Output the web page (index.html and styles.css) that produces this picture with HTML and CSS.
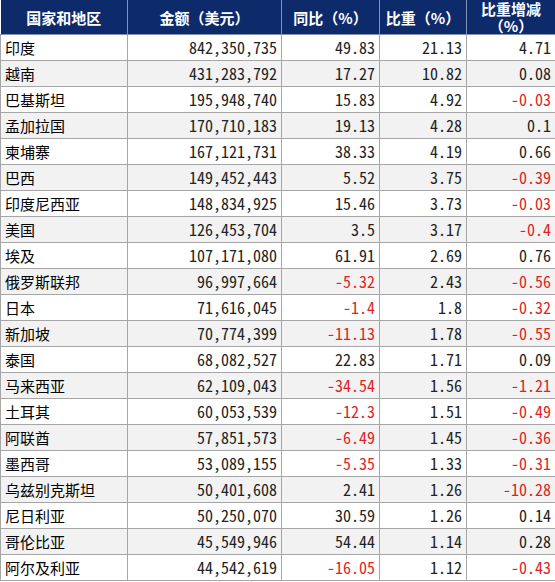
FILE: index.html
```html
<!DOCTYPE html>
<html lang="zh-CN">
<head>
  <meta charset="UTF-8" />
  <meta name="viewport" content="width=device-width, initial-scale=1" />
  <title>进口来源国家和地区</title>
  <link rel="stylesheet" href="styles.css">
</head>
<body>

  <table class="trade-table">
    <colgroup>
      <col class="col-name">
      <col class="col-amount">
      <col class="col-yoy">
      <col class="col-share">
      <col class="col-delta">
    </colgroup>
    <thead>
      <tr>
        <th>国家和地区</th>
        <th>金额（美元）</th>
        <th>同比（%）</th>
        <th>比重（%）</th>
        <th class="two-line"><div>比重增减</div><div>（%）</div></th>
      </tr>
    </thead>
    <tbody id="rows"></tbody>
  </table>

  <script>
    const rows = [
      ['印度', '842,350,735', '49.83', '21.13', '4.71'],
      ['越南', '431,283,792', '17.27', '10.82', '0.08'],
      ['巴基斯坦', '195,948,740', '15.83', '4.92', '-0.03'],
      ['孟加拉国', '170,710,183', '19.13', '4.28', '0.1'],
      ['柬埔寨', '167,121,731', '38.33', '4.19', '0.66'],
      ['巴西', '149,452,443', '5.52', '3.75', '-0.39'],
      ['印度尼西亚', '148,834,925', '15.46', '3.73', '-0.03'],
      ['美国', '126,453,704', '3.5', '3.17', '-0.4'],
      ['埃及', '107,171,080', '61.91', '2.69', '0.76'],
      ['俄罗斯联邦', '96,997,664', '-5.32', '2.43', '-0.56'],
      ['日本', '71,616,045', '-1.4', '1.8', '-0.32'],
      ['新加坡', '70,774,399', '-11.13', '1.78', '-0.55'],
      ['泰国', '68,082,527', '22.83', '1.71', '0.09'],
      ['马来西亚', '62,109,043', '-34.54', '1.56', '-1.21'],
      ['土耳其', '60,053,539', '-12.3', '1.51', '-0.49'],
      ['阿联酋', '57,851,573', '-6.49', '1.45', '-0.36'],
      ['墨西哥', '53,089,155', '-5.35', '1.33', '-0.31'],
      ['乌兹别克斯坦', '50,401,608', '2.41', '1.26', '-10.28'],
      ['尼日利亚', '50,250,070', '30.59', '1.26', '0.14'],
      ['哥伦比亚', '45,549,946', '54.44', '1.14', '0.28'],
      ['阿尔及利亚', '44,542,619', '-16.05', '1.12', '-0.43']
    ];

    const tbody = document.getElementById('rows');

    rows.forEach(row => {
      const tr = document.createElement('tr');
      tr.innerHTML = row.map((val, i) => {
        if (i === 0) return `<td class="name">${val}</td>`;
        const neg = val.startsWith('-') ? ' neg' : '';
        return `<td class="num${neg}">${val}</td>`;
      }).join('');
      tbody.appendChild(tr);
    });
  </script>

</body>
</html>
```

FILE: styles.css
```css
body {
  margin: 0;
  background: #ffffff;
  font-family: "Noto Sans CJK SC", sans-serif;
  color: #000;
}
.trade-table {
  border-collapse: collapse;
  table-layout: fixed;
  width: 555px;
}
.col-name { width: 127px; }
.col-amount { width: 154px; }
.col-yoy { width: 98px; }
.col-share { width: 87px; }
.col-delta { width: 89px; }

.trade-table th,
.trade-table td {
  border: 1px solid #a6a6a6;
  padding: 0 4px;
  white-space: nowrap;
}
.trade-table th {
  background: #0d2a6b;
  color: #fff;
  font-size: 15px;
  font-weight: bold;
  height: 34px;
  line-height: 17px;
  text-align: center;
  border-color: #8593b3;
  border-top: none;
}
.trade-table th:first-child { border-left: none; }
.trade-table th.two-line {
  padding: 0 2px;
  line-height: 17px;
}
.trade-table td {
  height: 25px;
  line-height: 25px;
  overflow: hidden;
}
.trade-table tbody tr:nth-child(even) td {
  background: #f2f2f2;
}
.name {
  font-size: 15px;
  text-align: left;
}
.num {
  font-size: 16px;
  text-align: right;
  font-feature-settings: "hwid";
  color: #222;
}
.num.neg {
  color: #e0231d;
}
```
